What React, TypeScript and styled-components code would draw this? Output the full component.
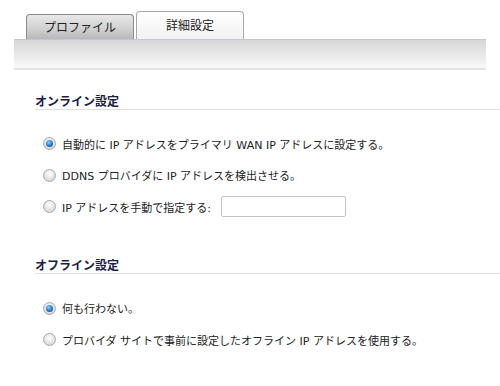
import React from "react";
import styled, { createGlobalStyle } from "styled-components";

const Global = createGlobalStyle`
  html, body { margin: 0; padding: 0; background: #ffffff; }
  body { font-family: "DejaVu Sans", "Noto Sans CJK JP", sans-serif; font-size: 12px; color: #222; }
`;

const Page = styled.div`
  width: 500px;
  height: 386px;
  padding-top: 11px;
  box-sizing: border-box;
  overflow: hidden;
`;

const TabRow = styled.div`
  display: flex;
  align-items: flex-end;
  gap: 2px;
  height: 28px;
  margin-left: 26px;
`;

const Tab = styled.div<{ $active?: boolean }>`
  box-sizing: border-box;
  width: 108px;
  height: ${(p) => (p.$active ? "28px" : "25px")};
  display: flex;
  align-items: center;
  justify-content: center;
  border: 1px solid ${(p) => (p.$active ? "#a8a8a8" : "#8c8c8c")};
  border-bottom: none;
  border-radius: 4px 4px 0 0;
  background: ${(p) =>
    p.$active
      ? "linear-gradient(#ffffff, #f2f2f2)"
      : "linear-gradient(#e8e8e8, #cfcfcf 60%, #b8b8b8)"};
  font-family: "Noto Sans CJK JP", sans-serif;
  font-size: 12px;
  color: #222;
  padding-bottom: ${(p) => (p.$active ? "3px" : "1px")};
`;

const Bar = styled.div`
  margin-left: 14px;
  width: 472px;
  height: 31px;
  box-sizing: border-box;
  border-top: 1px solid #c4c4d8;
  background: linear-gradient(#d6d6d6, #f2f2f2 80%, #fafafa);
  border-bottom: 2px solid #e2e2e2;
`;

const Section = styled.div<{ $top: number }>`
  margin-left: 35px;
  margin-top: ${(p) => p.$top}px;
`;

const Heading = styled.div`
  font-family: "Noto Sans CJK JP", sans-serif;
  font-weight: bold;
  font-size: 12px;
  line-height: 16px;
  color: #1c1c4a;
  border-bottom: 1px solid #e0e0e0;
`;

const Options = styled.div<{ $top: number }>`
  margin-top: ${(p) => p.$top}px;
  margin-left: 8px;
`;

const Row = styled.label`
  display: flex;
  align-items: center;
  height: 31.5px;
`;

const Radio = styled.span<{ $checked?: boolean }>`
  width: 13px;
  height: 13px;
  border-radius: 50%;
  box-sizing: border-box;
  border: 1px solid #a9a9a9;
  background: radial-gradient(circle at 50% 35%, #ffffff, #dcdcdc 70%, #c8c8c8);
  margin-right: 6px;
  display: flex;
  align-items: center;
  justify-content: center;
  flex-shrink: 0;
  &::after {
    content: "";
    display: ${(p) => (p.$checked ? "block" : "none")};
    width: 7px;
    height: 7px;
    border-radius: 50%;
    background: radial-gradient(circle at 40% 35%, #8fd0ff, #1f78c8 55%, #0a3f80);
  }
`;

const Text = styled.span`
  white-space: pre;
  font-size: 11px;
  color: #222;
  font-family: "DejaVu Sans", "Noto Sans CJK JP", sans-serif;
`;

const TextInput = styled.input`
  margin-left: 10px;
  width: 125px;
  height: 21px;
  box-sizing: border-box;
  border: 1px solid #c4c4c4;
  border-radius: 2px;
  background: #fff;
`;

export default function App() {
  return (
    <Page>
      <Global />
      <TabRow>
        <Tab>プロファイル</Tab>
        <Tab $active>詳細設定</Tab>
      </TabRow>
      <Bar />
      <Section $top={23}>
        <Heading>オンライン設定</Heading>
        <Options $top={18}>
          <Row>
            <Radio $checked />
            <Text>自動的に IP アドレスをプライマリ WAN IP アドレスに設定する。</Text>
          </Row>
          <Row>
            <Radio />
            <Text>DDNS プロバイダに IP アドレスを検出させる。</Text>
          </Row>
          <Row>
            <Radio />
            <Text>IP アドレスを手動で指定する:</Text>
            <TextInput type="text" />
          </Row>
        </Options>
      </Section>
      <Section $top={34}>
        <Heading>オフライン設定</Heading>
        <Options $top={19}>
          <Row>
            <Radio $checked />
            <Text>何も行わない。</Text>
          </Row>
          <Row>
            <Radio />
            <Text>プロバイダ サイトで事前に設定したオフライン IP アドレスを使用する。</Text>
          </Row>
        </Options>
      </Section>
    </Page>
  );
}
